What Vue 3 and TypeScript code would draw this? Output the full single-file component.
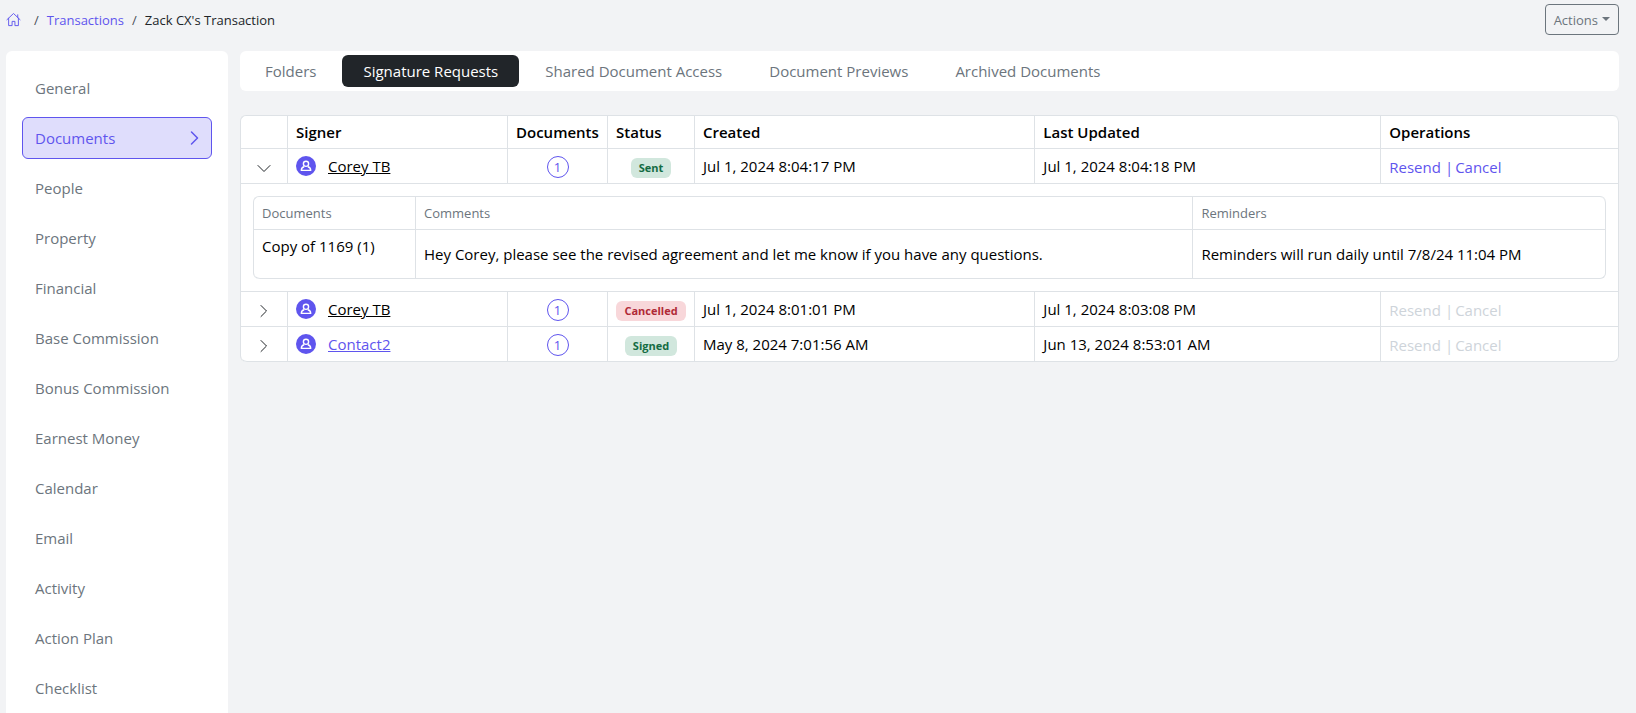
<script setup lang="ts">
import { ref } from 'vue'

interface Request {
  id: number
  signer: string
  linked: boolean
  documents: number
  status: 'Sent' | 'Cancelled' | 'Signed'
  created: string
  updated: string
  active: boolean
  detail?: { document: string; comment: string; reminder: string }
}

const sections = [
  'General', 'Documents', 'People', 'Property', 'Financial', 'Base Commission', 'Bonus Commission',
  'Earnest Money', 'Calendar', 'Email', 'Activity', 'Action Plan', 'Checklist',
]
const tabs = ['Folders', 'Signature Requests', 'Shared Document Access', 'Document Previews', 'Archived Documents']

const currentSection = ref('Documents')
const currentTab = ref('Signature Requests')
const expanded = ref<number | null>(1)

const requests: Request[] = [
  {
    id: 1, signer: 'Corey TB', linked: false, documents: 1, status: 'Sent',
    created: 'Jul 1, 2024 8:04:17 PM', updated: 'Jul 1, 2024 8:04:18 PM', active: true,
    detail: {
      document: 'Copy of 1169 (1)',
      comment: 'Hey Corey, please see the revised agreement and let me know if you have any questions.',
      reminder: 'Reminders will run daily until 7/8/24 11:04 PM',
    },
  },
  {
    id: 2, signer: 'Corey TB', linked: false, documents: 1, status: 'Cancelled',
    created: 'Jul 1, 2024 8:01:01 PM', updated: 'Jul 1, 2024 8:03:08 PM', active: false,
  },
  {
    id: 3, signer: 'Contact2', linked: true, documents: 1, status: 'Signed',
    created: 'May 8, 2024 7:01:56 AM', updated: 'Jun 13, 2024 8:53:01 AM', active: false,
  },
]

function toggle(id: number) {
  expanded.value = expanded.value === id ? null : id
}
</script>

<template>
  <div class="page">
    <header class="topbar">
      <nav class="crumbs" aria-label="Breadcrumb">
        <a href="#" class="home" aria-label="Home">
          <svg viewBox="0 0 16 16" width="15" height="15" fill="none" stroke="currentColor" stroke-width="1" stroke-linejoin="round" stroke-linecap="round">
            <path d="M1 8.2 8 1.6l7 6.6M12.5 3v2.8M2.8 6.7v7.8h3.7V10h3v4.5h3.7V6.7" />
          </svg>
        </a>
        <span class="slash">/</span>
        <a href="#">Transactions</a>
        <span class="slash">/</span>
        <span>Zack CX's Transaction</span>
      </nav>
      <button type="button" class="actions">Actions<span class="caret"></span></button>
    </header>

    <div class="body">
      <nav class="sidebar" aria-label="Transaction sections">
        <a
          v-for="s in sections" :key="s" href="#" class="section"
          :class="{ current: s === currentSection }" @click.prevent="currentSection = s"
        >
          {{ s }}
          <svg v-if="s === currentSection" viewBox="0 0 16 16" width="16" height="16" fill="none" stroke="currentColor" stroke-width="1.5" stroke-linecap="round" stroke-linejoin="round">
            <path d="m4.500 2 6 6-6 6" />
          </svg>
        </a>
      </nav>

      <main class="main">
        <div class="tabs">
          <button
            v-for="t in tabs" :key="t" type="button" class="tab"
            :class="{ selected: t === currentTab }" @click="currentTab = t"
          >{{ t }}</button>
        </div>

        <table class="requests">
          <colgroup>
            <col class="c-toggle"><col class="c-signer"><col class="c-docs"><col class="c-status">
            <col class="c-created"><col class="c-updated"><col>
          </colgroup>
          <thead>
            <tr>
              <th></th><th>Signer</th><th>Documents</th><th>Status</th>
              <th>Created</th><th>Last Updated</th><th>Operations</th>
            </tr>
          </thead>
          <tbody>
            <template v-for="r in requests" :key="r.id">
              <tr>
                <td class="center">
                  <button type="button" class="toggle" :aria-expanded="expanded === r.id" aria-label="Toggle details" @click="toggle(r.id)">
                    <svg viewBox="0 0 14 14" width="14" height="14" fill="none" stroke="currentColor" stroke-linecap="round" stroke-linejoin="round">
                      <path :d="expanded === r.id ? 'm1 4.500 6 6 6-6' : 'm4 1.500 5.500 5.500L4 12.500'" />
                    </svg>
                  </button>
                </td>
                <td>
                  <div class="signer">
                    <svg viewBox="0 0 20 20" width="20" height="20">
                      <circle cx="10" cy="10" r="10" class="disc" />
                      <g fill="none" stroke="#fff" stroke-width="1.4" stroke-linejoin="round">
                        <circle cx="10" cy="7.8" r="2.6" />
                        <path d="M8.2 10.8c-1.9.5-2.900 1.600-2.900 3.600h9.400c0-2-1-3.100-2.900-3.600" />
                      </g>
                    </svg>
                    <a href="#" :class="{ linked: r.linked }">{{ r.signer }}</a>
                  </div>
                </td>
                <td class="center"><span class="count">{{ r.documents }}</span></td>
                <td class="center"><span class="badge" :class="r.status.toLowerCase()">{{ r.status }}</span></td>
                <td>{{ r.created }}</td>
                <td>{{ r.updated }}</td>
                <td>
                  <div class="ops">
                    <button type="button" :disabled="!r.active">Resend</button>
                    <button type="button" class="second" :disabled="!r.active">Cancel</button>
                  </div>
                </td>
              </tr>
              <tr v-if="r.detail && expanded === r.id">
                <td colspan="7" class="detail-cell">
                  <table class="detail">
                    <colgroup><col class="d-docs"><col class="d-comments"><col></colgroup>
                    <thead>
                      <tr><th>Documents</th><th>Comments</th><th>Reminders</th></tr>
                    </thead>
                    <tbody>
                      <tr>
                        <td class="top">{{ r.detail.document }}</td>
                        <td>{{ r.detail.comment }}</td>
                        <td>{{ r.detail.reminder }}</td>
                      </tr>
                    </tbody>
                  </table>
                </td>
              </tr>
            </template>
          </tbody>
        </table>
      </main>
    </div>
  </div>
</template>

<style>
body {
  margin: 0;
  background: #f2f3f5;
}
</style>

<style scoped>
.page {
  --accent: #5f55ee;
  --line: #dee2e6;
  --muted: #6c757d;
  box-sizing: border-box;
  display: flex;
  flex-direction: column;
  height: 100vh;
  padding: 4px 17px 0 6px;
  background: #f2f3f5;
  color: #000;
  font: 15px/24px "Segoe UI", "Open Sans", "Noto Sans", sans-serif;
}

button {
  font: inherit;
  cursor: pointer;
}

a {
  color: var(--accent);
  text-decoration: none;
}

.topbar {
  display: flex;
  flex: none;
  justify-content: space-between;
  align-items: center;
  height: 31px;
  margin-bottom: 16px;
}

.crumbs {
  display: flex;
  align-items: center;
  gap: 8px;
  font-size: 13px;
  color: #212529;
}

.home {
  display: flex;
  margin-right: 5px;
}

.slash {
  color: #495057;
}

.actions {
  display: flex;
  align-items: center;
  gap: 4px;
  box-sizing: border-box;
  height: 31px;
  padding: 0 8px;
  border: 1px solid var(--muted);
  border-radius: 4px;
  background: transparent;
  color: var(--muted);
  font-size: 13px;
}

.caret {
  margin-bottom: 2px;
  border: 4px solid transparent;
  border-top-color: currentColor;
  border-bottom: 0;
}

.body {
  display: flex;
  flex: 1;
  gap: 12px;
  align-items: flex-start;
  min-height: 0;
  overflow: auto;
  scrollbar-width: none;
}

.sidebar {
  display: flex;
  flex: none;
  flex-direction: column;
  gap: 8px;
  box-sizing: border-box;
  width: 222px;
  padding: 16px;
  border-radius: 6px;
  background: #fff;
}

.section {
  display: flex;
  justify-content: space-between;
  align-items: center;
  padding: 8px 8px 8px 12px;
  border: 1px solid transparent;
  border-radius: 6px;
  color: var(--muted);
}

.section.current {
  border-color: var(--accent);
  background: #dfddfc;
  color: var(--accent);
}

.main {
  flex: 1;
  min-width: 0;
}

.tabs {
  display: flex;
  gap: 5px;
  padding: 4px;
  margin-bottom: 24px;
  border-radius: 6px;
  background: #fff;
}

.tab {
  padding: 4px 21px;
  border: 0;
  border-radius: 6px;
  background: transparent;
  color: var(--muted);
}

.tab.selected {
  background: #212529;
  color: #fff;
}

table {
  width: 100%;
  table-layout: fixed;
  border: 1px solid var(--line);
  border-width: 1px 0 0 1px;
  border-spacing: 0;
  border-radius: 6px;
  background: #fff;
}

th,
td {
  box-sizing: border-box;
  padding: 0 8px;
  border: 1px solid var(--line);
  border-width: 0 1px 1px 0;
  text-align: left;
}

th {
  height: 33px;
  font-weight: 600;
  white-space: nowrap;
}

td {
  height: 35px;
}

table > thead > tr:first-child > th:last-child {
  border-top-right-radius: 6px;
}

table > tbody > tr:last-child > td:last-child {
  border-bottom-right-radius: 6px;
}

table > tbody > tr:last-child > td:first-child {
  border-bottom-left-radius: 6px;
}

.c-toggle { width: 47px; }
.c-signer { width: 220px; }
.c-docs { width: 100px; }
.c-status { width: 87px; }
.c-created { width: 24.7%; }
.c-updated { width: 25.1%; }
.d-docs { width: 162px; }
.d-comments { width: 57.5%; }

.center {
  text-align: center;
}

.toggle {
  display: inline-flex;
  padding: 0;
  border: 0;
  background: transparent;
  color: #212529;
  vertical-align: middle;
}

.signer {
  display: flex;
  align-items: center;
  gap: 12px;
}

.signer a {
  color: #000;
  text-decoration: underline;
}

.signer a.linked {
  color: var(--accent);
}

.disc {
  fill: var(--accent);
}

.count {
  display: inline-block;
  box-sizing: border-box;
  width: 22px;
  height: 22px;
  border: 1px solid var(--accent);
  border-radius: 50%;
  color: var(--accent);
  font-size: 13px;
  line-height: 20px;
  vertical-align: middle;
}

.badge {
  display: inline-block;
  padding: 0 8px;
  border-radius: 6px;
  font-size: 11px;
  font-weight: 700;
  line-height: 20px;
  vertical-align: middle;
}

.sent,
.signed {
  background: #d1e7dd;
  color: #146c43;
}

.cancelled {
  background: #f8d7da;
  color: #b02a37;
}

.ops {
  display: flex;
  gap: 4px;
  padding-top: 2px;
}

.ops button {
  padding: 0;
  border: 0;
  background: transparent;
  color: var(--accent);
  line-height: 20px;
}

.ops .second {
  display: flex;
  gap: 2px;
}

.ops .second::before {
  content: "|";
}

.ops button:disabled {
  color: #ced4da;
  cursor: default;
}

.detail-cell {
  padding: 12px;
}

.detail th {
  color: var(--muted);
  font-size: 13px;
  font-weight: 400;
}

.detail td {
  height: 49px;
}

.detail .top {
  padding-top: 4px;
  vertical-align: top;
}
</style>
